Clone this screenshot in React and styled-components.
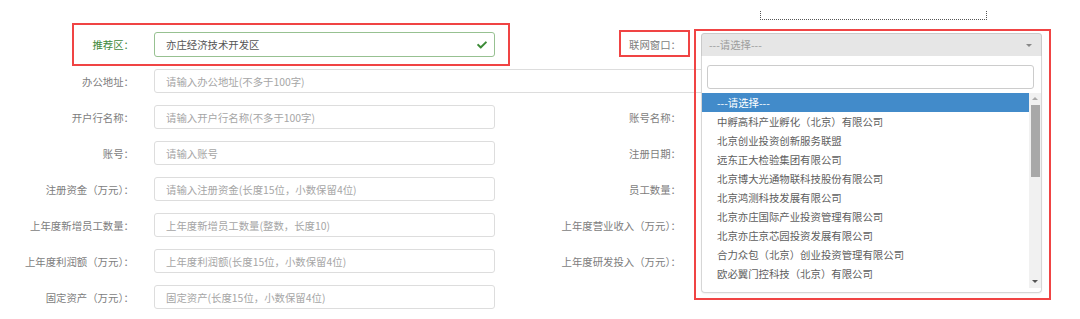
import React from 'react';
import styled, { createGlobalStyle } from 'styled-components';
import { FaCheck } from 'react-icons/fa';

const GlobalStyle = createGlobalStyle`
  html, body {
    margin: 0;
    padding: 0;
    background: #fff;
  }
  body {
    font-family: "Noto Sans CJK SC", "Noto Sans", sans-serif;
    font-size: 10.4px;
    color: #666;
  }
  * { box-sizing: border-box; }
`;

const Page = styled.div`
  position: relative;
  width: 1080px;
  height: 319px;
  overflow: hidden;
  padding-top: 26px;
`;

const Form = styled.div`
  display: grid;
  grid-template-columns: 134px 341px 166px 341px;
  grid-auto-rows: 36px;
  grid-template-rows: 37px;
  column-gap: 20px;
  align-items: center;
`;

const Label = styled.label`
  text-align: right;
  white-space: nowrap;
  color: ${p => (p.success ? '#3f8a3c' : '#7d7d7d')};
`;

const Field = styled.div`
  position: relative;
  grid-column: ${p => p.span || 'auto'};
`;

const Input = styled.input`
  display: block;
  width: 100%;
  height: ${p => (p.success ? '25px' : '24px')};
  padding: 0 28px 0 11px;
  border: 1px solid ${p => (p.success ? '#97c191' : '#ddd')};
  border-radius: 3px;
  background: #fff;
  font-family: inherit;
  font-size: 10.4px;
  color: #555;
  outline: none;

  &::placeholder {
    color: #a6a6a6;
  }
`;

const CheckMark = styled(FaCheck)`
  position: absolute;
  right: 7px;
  top: 50%;
  transform: translateY(-50%);
  width: 12px;
  height: 10px;
  color: #3b8a36;
`;

const Select = styled.div`
  position: relative;
  height: 24px;
  display: flex;
  align-items: center;
  justify-content: space-between;
  padding: 0 9px 0 7px;
  border: 1px solid #cacaca;
  border-radius: 3px 3px 0 0;
  background: #e6e6e6;
  color: #9d9d9d;
`;

const Caret = styled.span`
  width: 0;
  height: 0;
  border-left: 3px solid transparent;
  border-right: 3px solid transparent;
  border-top: 3px solid #888;
  margin-top: 1px;
`;

const Dropdown = styled.div`
  position: absolute;
  top: 23px;
  left: 0;
  right: 0;
  z-index: 5;
  height: 237px;
  background: #fff;
  border: 1px solid #d6d6d6;
  border-top: none;
  border-radius: 0 0 4px 4px;
  padding-top: 9px;
  display: flex;
  flex-direction: column;
  box-shadow: 0 1px 2px rgba(0, 0, 0, 0.06);
`;

const Search = styled.div`
  height: 24px;
  margin: 0 7px 4px 5px;
  border: 1px solid #ccc;
  border-radius: 3px;
  background: #fff;
`;

const ListArea = styled.div`
  display: flex;
  height: 195px;
`;

const Options = styled.ul`
  flex: 1;
  margin: 0;
  padding: 0;
  list-style: none;
  overflow: hidden;
`;

const Option = styled.li`
  height: 19px;
  line-height: 19px;
  padding-left: 15px;
  white-space: nowrap;
  color: ${p => (p.active ? '#fff' : '#5e5e5e')};
  background: ${p => (p.active ? '#428bca' : 'transparent')};
`;

const ScrollBar = styled.div`
  width: 12px;
  display: flex;
  flex-direction: column;
  align-items: center;
  background: #f1f1f1;
`;

const Arrow = styled.span`
  flex: none;
  height: 12px;
  display: flex;
  align-items: center;
  justify-content: center;

  &::after {
    content: '';
    border-left: 3px solid transparent;
    border-right: 3px solid transparent;
    ${p => (p.down ? 'border-top: 3px solid #555;' : 'border-bottom: 3px solid #aaa;')}
  }
`;

const Thumb = styled.div`
  width: 9px;
  height: 72px;
  background: #a8a8a8;
`;

const Track = styled.div`
  flex: 1;
`;

const Mark = styled.div`
  position: absolute;
  z-index: 10;
  border: 2px solid #f04444;
  pointer-events: none;
`;

const DottedFrame = styled.div`
  position: absolute;
  left: 760px;
  top: 11px;
  width: 227px;
  height: 9px;
  border: 1px dotted #555;
  border-top: none;
`;

const companies = [
  '中孵高科产业孵化（北京）有限公司',
  '北京创业投资创新服务联盟',
  '远东正大检验集团有限公司',
  '北京博大光通物联科技股份有限公司',
  '北京鸿测科技发展有限公司',
  '北京亦庄国际产业投资管理有限公司',
  '北京亦庄京芯园投资发展有限公司',
  '合力众包（北京）创业投资管理有限公司',
  '欧必翼门控科技（北京）有限公司',
];

const rows = [
  ['开户行名称：', '请输入开户行名称(不多于100字)', '账号名称：'],
  ['账号：', '请输入账号', '注册日期：'],
  ['注册资金（万元）：', '请输入注册资金(长度15位，小数保留4位)', '员工数量：'],
  ['上年度新增员工数量：', '上年度新增员工数量(整数，长度10)', '上年度营业收入（万元）：'],
  ['上年度利润额（万元）：', '上年度利润额(长度15位，小数保留4位)', '上年度研发投入（万元）：'],
  ['固定资产（万元）：', '固定资产(长度15位，小数保留4位)', null],
];

export default function App() {
  return (
    <Page>
      <GlobalStyle />
      <DottedFrame />

      <Form>
        <Label success>推荐区：</Label>
        <Field>
          <Input success readOnly value="亦庄经济技术开发区" />
          <CheckMark />
        </Field>
        <Label>联网窗口：</Label>
        <Field>
          <Select>
            <span>---请选择---</span>
            <Caret />
          </Select>
          <Dropdown>
            <Search />
            <ListArea>
              <Options>
                <Option active>---请选择---</Option>
                {companies.map(name => (
                  <Option key={name}>{name}</Option>
                ))}
              </Options>
              <ScrollBar>
                <Arrow />
                <Thumb />
                <Track />
                <Arrow down />
              </ScrollBar>
            </ListArea>
          </Dropdown>
        </Field>

        <Label>办公地址：</Label>
        <Field span="2 / -1">
          <Input placeholder="请输入办公地址(不多于100字)" />
        </Field>

        {rows.map(([left, placeholder, right]) => (
          <React.Fragment key={left}>
            <Label>{left}</Label>
            <Field>
              <Input placeholder={placeholder} />
            </Field>
            {right && (
              <>
                <Label>{right}</Label>
                <Field>
                  <Input />
                </Field>
              </>
            )}
          </React.Fragment>
        ))}
      </Form>

      <Mark style={{ left: 72, top: 23, width: 438, height: 43 }} />
      <Mark style={{ left: 619, top: 30, width: 71, height: 27 }} />
      <Mark style={{ left: 694, top: 29, width: 357, height: 271 }} />
    </Page>
  );
}
